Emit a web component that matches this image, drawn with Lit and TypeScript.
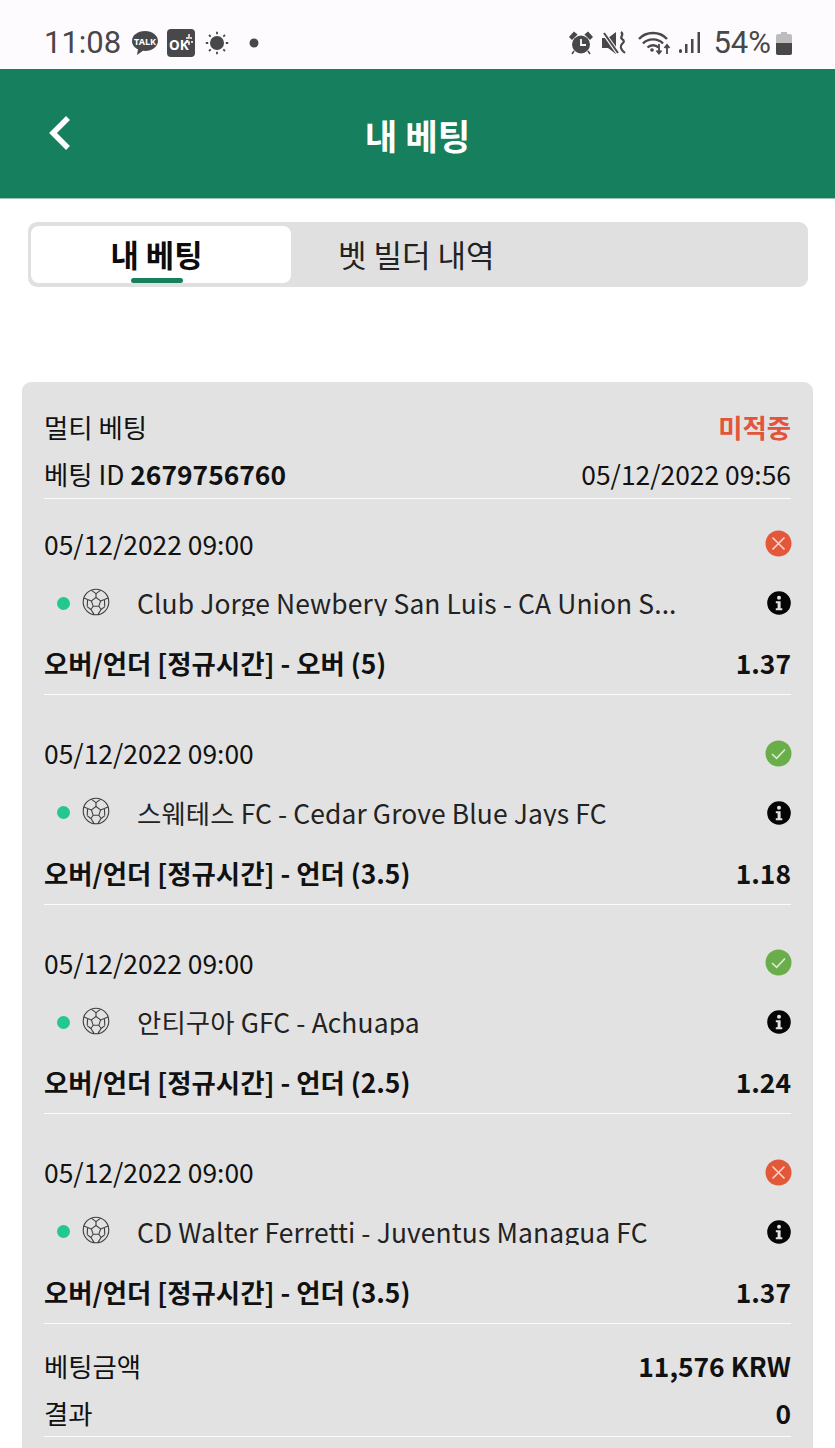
import { LitElement, html, css, svg } from "lit";
import { customElement } from "lit/decorators.js";

const matches = [
  { team: "Club Jorge Newbery San Luis - CA Union S...", market: "오버/언더 [정규시간] - 오버 (5)", odd: "1.37", won: false },
  { team: "스웨테스 FC - Cedar Grove Blue Jays FC", market: "오버/언더 [정규시간] - 언더 (3.5)", odd: "1.18", won: true },
  { team: "안티구아 GFC - Achuapa", market: "오버/언더 [정규시간] - 언더 (2.5)", odd: "1.24", won: true },
  { team: "CD Walter Ferretti - Juventus Managua FC", market: "오버/언더 [정규시간] - 언더 (3.5)", odd: "1.37", won: false },
];

const ball = svg`<svg width="28" height="28" viewBox="0 0 28 28" fill="none" stroke="#3f3f3f" stroke-width="1.100">
  <circle cx="14" cy="14" r="12.800"/>
  <path d="M14 9.500l4.600 3.400-1.800 5.400h-5.600l-1.800-5.400z"/>
  <path d="M14 9.500V5.600M18.600 12.900l3.800-1.300M16.800 18.300l2.300 3.200M11.200 18.300l-2.300 3.200M9.400 12.900l-3.800-1.300"/>
  <path d="M9.600 2.400L14 5.600l4.400-3.200M22.400 11.600l3.600-1.600M22.400 11.600l.4 6.600M19.100 21.500l-3 4.600M19.100 21.500l3.800-2.900M8.900 21.500l3 4.600M8.900 21.500l-3.800-2.900M5.600 11.600L2 10M5.600 11.600l-.4 6.600"/>
</svg>`;

const cross = svg`<svg width="27" height="27" viewBox="0 0 27 27"><circle cx="13.500" cy="13.500" r="13" fill="#e4583a"/><path d="M7.500 7.500l12 12M19.500 7.500l-12 12" stroke="#f6d4cb" stroke-width="1.600" fill="none"/></svg>`;
const check = svg`<svg width="27" height="27" viewBox="0 0 27 27"><circle cx="13.500" cy="13.500" r="13" fill="#6aae4b"/><path d="M7 14l4.600 4.400L20 9.500" stroke="#d8ecce" stroke-width="1.700" fill="none"/></svg>`;
const info = svg`<svg width="24" height="24" viewBox="0 0 24 24"><circle cx="12" cy="12" r="11.800" fill="#050505"/><circle cx="12" cy="6.800" r="2" fill="#e2e2e2"/><path d="M8.800 10.200h4.800v7h1.700v2H8.800v-2h1.800v-5H8.800z" fill="#e2e2e2"/></svg>`;

@customElement("app-root")
export class AppRoot extends LitElement {
  static styles = css`
    :host { display: block; width: 835px; height: 1448px; overflow: hidden; background: #fff; color: #111;
      font-family: "Noto Sans CJK KR", "Noto Sans", sans-serif; }
    .status { height: 69px; background: #fdfbfe; display: flex; align-items: center; justify-content: space-between;
      padding: 16px 43px 0 44px; color: #48474a; font-family: Roboto, "Noto Sans", sans-serif; font-size: 31px; box-sizing: border-box; }
    .group { display: flex; align-items: center; }
    .status svg { display: block; flex: none; }
    .ml10 { margin-left: 10px; }
    .ml8 { margin-left: 8px; }
    .ml20 { margin-left: 20px; }
    .ml9 { margin-left: 9px; }
    .ml7 { margin-left: 7px; }
    .ml12 { margin-left: 12px; }
    .ml5 { margin-left: 5px; }
    .header { height: 130px; background: #167f5d; border-bottom: 1px solid #9cc4b4; box-sizing: border-box; position: relative;
      display: flex; align-items: center; justify-content: center; color: #fff; font-size: 35.400px; font-weight: 700; }
    .title { line-height: 1; padding-top: 2px; }
    .back { position: absolute; left: 46px; top: 46px; display: block; }
    .tabs { margin: 23px 27px 0 28px; height: 65px; background: #e0e0e0; border-radius: 9px; display: flex; padding: 4px 3px 4px; box-sizing: border-box; }
    .tab { width: 260px; height: 57px; background: #fff; border-radius: 8px; display: flex; align-items: center; justify-content: center;
      font-size: 30.800px; font-weight: 700; color: #0c0c0c; position: relative; line-height: 1; padding-right: 9px; box-sizing: border-box; }
    .tab::after { content: ""; position: absolute; left: 100px; bottom: 0; width: 52px; height: 5px; border-radius: 3px; background: #167f5d; }
    .tab2 { margin-left: 47px; padding-bottom: 2px; display: flex; align-items: center; font-size: 31px; color: #222; line-height: 1; }
    .card { margin: 95px 22px 0 22px; background: #e2e2e2; border-radius: 9px 9px 0 0; padding: 22px 22px 0; height: 1200px; box-sizing: border-box; font-size: 26.400px; }
    .row { display: flex; justify-content: space-between; align-items: center; }
    .top { height: 47px; }
    .top2 { height: 47.500px; border-bottom: 1.500px solid #fbfbfb; box-sizing: border-box; }
    .lost { color: #e2553a; font-weight: 700; }
    b { font-weight: 700; }
    .match { height: 196.500px; box-sizing: border-box; border-bottom: 1.500px solid #fbfbfb; }
    .match + .match { margin-top: 13px; }
    .date { height: 93px; }
    .date span { padding-bottom: 2px; }
    .date svg, .team svg { display: block; flex: none; }
    .date svg { margin: -3px -1px 0 0; }
    .team { height: 43px; margin-top: -10px; }
    .who { display: flex; align-items: center; min-width: 0; }
    .dot { width: 13px; height: 13px; border-radius: 50%; background: #22c88c; margin-left: 13px; flex: none; }
    .who svg { margin: -3px 27px 0 12px; }
    .name { height: 26px; line-height: 26px; overflow: hidden; white-space: nowrap; letter-spacing: 0.120px; color: #222; }
    .market { height: 60px; margin-top: 8px; font-weight: 700; }
    .date span, .top span, .top2 span { line-height: 1; }
    .sum { height: 46px; }
    .sum1 { margin-top: 19px; }
    .sum2 { border-bottom: 1.500px solid #fbfbfb; height: 48px; box-sizing: border-box; }
  `;

  render() {
    return html`
      <div class="status">
        <div class="group">
          <span>11:08</span>
          <svg class="ml10" width="28" height="26" viewBox="0 0 28 26"><path d="M14 1C6.500 1 1 5.400 1 11c0 3.700 2.400 6.700 6 8.300L6 25l6-4.200c.7.1 1.300.1 2 .1 7.500 0 13-4.400 13-9.900S21.500 1 14 1z" fill="#48474a"/><text x="14" y="15" text-anchor="middle" font-size="9" font-weight="700" fill="#fff" font-family="Noto Sans">TALK</text></svg>
          <svg class="ml8" width="28" height="28" viewBox="0 0 28 28"><rect width="28" height="28" rx="4" fill="#48474a"/><text x="2" y="21" font-size="13.500" font-weight="700" fill="#fff" font-family="Noto Sans">OK</text><path d="M22 5v4h-3M25 9h-2M19 13h3v3M24 13h2" stroke="#fff" stroke-width="1.500" fill="none"/></svg>
          <svg class="ml10" width="24" height="24" viewBox="0 0 24 24"><circle cx="12" cy="12" r="7" fill="#48474a"/><path d="M12 .8v2.400M12 20.800v2.400M.8 12h2.400M20.800 12h2.400M4 4l1.700 1.700M18.300 18.300L20 20M4 20l1.700-1.700M18.300 5.700L20 4" stroke="#48474a" stroke-width="1.800"/></svg>
          <svg class="ml20" width="10" height="10" viewBox="0 0 10 10"><circle cx="5" cy="5" r="4.500" fill="#48474a"/></svg>
        </div>
        <div class="group">
          <svg width="24" height="24" viewBox="0 0 24 24"><circle cx="12" cy="13.500" r="9" fill="#48474a"/><path d="M1 6l4-4.500 2.500 2-4.500 4.500zM23 6l-4-4.500-2.500 2 4.500 4.500zM5 20l-2 3M19 20l2 3" fill="#48474a" stroke="#48474a" stroke-width="1.500"/><path d="M12 8v6h5" stroke="#fdfbfe" stroke-width="1.800" fill="none"/></svg>
          <svg class="ml9" width="26" height="24" viewBox="0 0 26 24"><path d="M0 7h6l8-6v22l-8-6H0z" fill="#48474a"/><path d="M1 1l15 21" stroke="#fdfbfe" stroke-width="4"/><path d="M2 2l14 20" stroke="#48474a" stroke-width="2"/><path d="M19 1c4 3-2 5 1 7s2 3 0 5-2 5 3 9" stroke="#48474a" stroke-width="2.200" fill="none"/></svg>
          <svg class="ml10" width="34" height="26" viewBox="0 0 34 26" fill="none" stroke="#48474a" stroke-width="2.400"><path d="M1 9c7-8 21-8 28 0M5 13.500c5-5.500 15-5.500 20 0M9.500 17.500c3-3 8-3 11 0"/><circle cx="14" cy="20" r="1.800" fill="#48474a" stroke="none"/><path d="M21 14v9M18.500 20.500l2.500 3 2.500-3M29 24v-9M26.500 18l2.500-3 2.500 3" stroke-width="1.800"/></svg>
          <svg class="ml7" width="22" height="24" viewBox="0 0 22 24" fill="#48474a"><rect x="0" y="18" width="3" height="4" rx="1.500"/><rect x="6" y="13" width="2.500" height="9"/><rect x="12" y="8" width="2.500" height="14"/><rect x="18.500" y="1" width="2.500" height="21"/></svg>
          <span class="ml12">54%</span>
          <svg class="ml5" width="16" height="24" viewBox="0 0 16 24"><path d="M5 1h6v2h3a2 2 0 012 2v17a2 2 0 01-2 2H2a2 2 0 01-2-2V5a2 2 0 012-2h3z" fill="#bdbcbe"/><path d="M0 12h16v10a2 2 0 01-2 2H2a2 2 0 01-2-2z" fill="#48474a"/></svg>
        </div>
      </div>
      <div class="header">
        <svg class="back" width="28" height="36" viewBox="0 0 28 36"><path d="M22 3L7 18l15 15" stroke="#fff" stroke-width="5.500" fill="none"/></svg>
        <span class="title">내 베팅</span>
      </div>
      <div class="tabs">
        <div class="tab">내 베팅</div>
        <div class="tab2">벳 빌더 내역</div>
      </div>
      <div class="card">
        <div class="row top"><span>멀티 베팅</span><span class="lost">미적중</span></div>
        <div class="row top2"><span>베팅 ID <b>2679756760</b></span><span>05/12/2022 09:56</span></div>
        ${matches.map(
          (m) => html`<div class="match">
            <div class="row date"><span>05/12/2022 09:00</span>${m.won ? check : cross}</div>
            <div class="row team">
              <div class="who"><i class="dot"></i>${ball}<span class="name">${m.team}</span></div>${info}
            </div>
            <div class="row market"><span>${m.market}</span><span>${m.odd}</span></div>
          </div>`
        )}
        <div class="row sum sum1"><span>베팅금액</span><b>11,576 KRW</b></div>
        <div class="row sum2"><span>결과</span><b>0</b></div>
      </div>
    `;
  }
}
